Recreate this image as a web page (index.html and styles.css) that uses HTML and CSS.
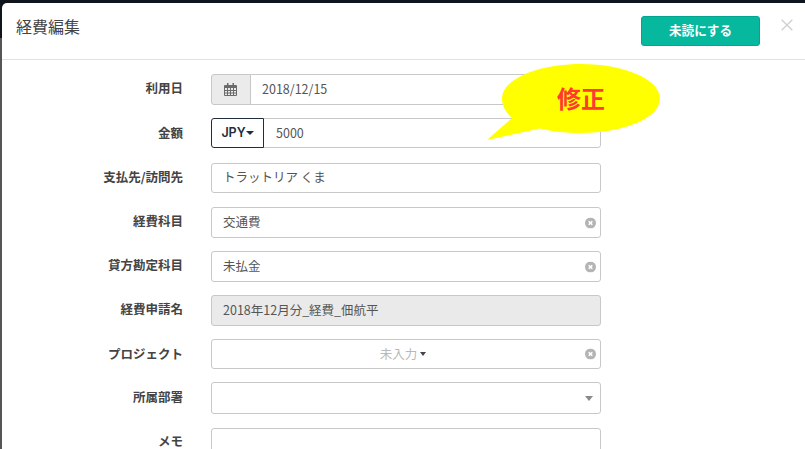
FILE: index.html
```html
<!DOCTYPE html>
<html lang="ja">
<head>
<meta charset="utf-8">
<title>経費編集</title>
<link rel="stylesheet" href="styles.css">
</head>
<body>
<div class="modal">
  <header class="modal-head">
    <h1 class="title">経費編集</h1>
    <button class="unread" type="button">未読にする</button>
    <svg class="close" width="12" height="12" viewBox="0 0 12 12"><path d="M.7.7L11.300 11.300M11.300.7L.7 11.300" stroke="#d0d0d0" stroke-width="1.400" fill="none"/></svg>
  </header>
  <form class="form">
    <div class="row">
      <label class="label">利用日</label>
      <div class="field">
        <span class="addon">
          <svg width="13" height="13" viewBox="0 0 13 13"><path fill="#6b6b6b" fill-rule="evenodd" d="M3 0h1.500v2H8.500V0H10v2h2a1 1 0 0 1 1 1v9a1 1 0 0 1-1 1H1a1 1 0 0 1-1-1V3a1 1 0 0 1 1-1h2zM1 5v2h2V5zm3 0v2h2V5zm3 0v2h2V5zm3 0v2h2V5zM1 8v1.500h2V8zm3 0v1.500h2V8zm3 0v1.500h2V8zm3 0v1.500h2V8zM1 10.500V12h2v-1.500zm3 0V12h2v-1.500zm3 0V12h2v-1.500zm3 0V12h2v-1.500z"/></svg>
        </span>
        <div class="box joined">2018/12/15</div>
      </div>
    </div>
    <div class="row amount-row">
      <label class="label">金額</label>
      <div class="field">
        <span class="currency">JPY<i class="caret dark"></i></span>
        <div class="box joined amount">5000</div>
      </div>
    </div>
    <div class="row payee-row">
      <label class="label">支払先/訪問先</label>
      <div class="field"><div class="box">トラットリア くま</div></div>
    </div>
    <div class="row">
      <label class="label">経費科目</label>
      <div class="field"><div class="box">交通費<svg class="clear" width="11" height="11" viewBox="0 0 11 11"><circle cx="5.500" cy="5.500" r="5.500" fill="#b4b4b4"/><path d="M3.700 3.700l3.600 3.600M7.300 3.700l-3.600 3.600" stroke="#fff" stroke-width="1.600"/></svg></div></div>
    </div>
    <div class="row">
      <label class="label">貸方勘定科目</label>
      <div class="field"><div class="box">未払金<svg class="clear" width="11" height="11" viewBox="0 0 11 11"><circle cx="5.500" cy="5.500" r="5.500" fill="#b4b4b4"/><path d="M3.700 3.700l3.600 3.600M7.300 3.700l-3.600 3.600" stroke="#fff" stroke-width="1.600"/></svg></div></div>
    </div>
    <div class="row">
      <label class="label">経費申請名</label>
      <div class="field"><div class="box disabled">2018年12月分_経費_佃航平</div></div>
    </div>
    <div class="row project-row">
      <label class="label">プロジェクト</label>
      <div class="field"><div class="box center"><span class="placeholder">未入力</span><i class="caret small"></i><svg class="clear" width="11" height="11" viewBox="0 0 11 11"><circle cx="5.500" cy="5.500" r="5.500" fill="#b4b4b4"/><path d="M3.700 3.700l3.600 3.600M7.300 3.700l-3.600 3.600" stroke="#fff" stroke-width="1.600"/></svg></div></div>
    </div>
    <div class="row dept-row">
      <label class="label">所属部署</label>
      <div class="field"><div class="box"><i class="caret gray"></i></div></div>
    </div>
    <div class="row memo-row">
      <label class="label">メモ</label>
      <div class="field"><div class="box area"></div></div>
    </div>
  </form>
  <div class="bubble">
    <svg class="bubble-shape" width="176" height="80" viewBox="0 0 176 80"><path fill="#ffff00" d="M94 0c44 0 79 15.500 79 34.500s-35 34.500-79 34.500c-15 0-29-1.500-41-4.500L0 76 25 54C18.500 48 15 41.500 15 34.500 15 15.500 50 0 94 0z"/></svg>
    <span class="bubble-text">修正</span>
  </div>
</div>
</body>
</html>
```
FILE: styles.css
```css
* { box-sizing: border-box; }
html, body { margin: 0; padding: 0; height: 449px; overflow: hidden; }
body {
  background: linear-gradient(#10141c 0 38px, #555 38px);
  font-family: "Noto Sans CJK JP", "Liberation Sans", sans-serif;
  color: #333;
}
.modal {
  position: relative;
  margin: 3px 0 0 2px;
  height: 446px;
  overflow: hidden;
  background: #fff;
  border-radius: 5px 0 0 0;
}
.modal-head {
  display: flex;
  align-items: flex-start;
  height: 57px;
  padding: 13px 12px 0 14px;
  border-bottom: 1px solid #e1e1e1;
}
.title { margin: -1px 0 0; flex: 1; font-size: 16px; font-weight: 400; line-height: 22px; color: #444; }
.unread {
  width: 119px;
  height: 30px;
  margin-right: 21px;
  padding: 0 0 1px;
  border: 1px solid #04a58e;
  border-radius: 3px;
  background: #05b89e;
  color: #fff;
  font: 700 12.600px/1 "Noto Sans CJK JP", sans-serif;
}
.close { margin-top: 3px; }
.form { padding-top: 14px; }
.row { display: flex; align-items: center; height: 31px; margin-bottom: 13px; }
.amount-row { height: 30px; margin-bottom: 15px; }
.payee-row { height: 30px; margin-bottom: 14px; }
.project-row { height: 30px; }
.dept-row { height: 32px; margin-bottom: 14px; }
.memo-row { align-items: flex-start; }
.label {
  width: 181px;
  padding-bottom: 2px;
  text-align: right;
  font-size: 12.500px;
  font-weight: 700;
  line-height: 1;
  color: #444;
}
.amount-row .label, .project-row .label { padding-bottom: 0; }
.memo-row .label { margin-top: 7px; padding-bottom: 0; }
.field { display: flex; width: 390px; height: 100%; margin-left: 28px; }
.box {
  position: relative;
  flex: 1;
  display: flex;
  align-items: center;
  height: 100%;
  padding: 0 11px 1px;
  border: 1px solid #c8c8c8;
  border-radius: 3px;
  background: #fff;
  font: 12.500px/1 "Noto Sans CJK JP", sans-serif;
  color: #555;
}
.box.joined { border-radius: 0 3px 3px 0; margin-left: -1px; }
.box.amount { padding: 0 11px 0 12px; }
.box.disabled { background: #eaeaea; }
.box.center { justify-content: center; padding: 0 17px 0 11px; }
.box.area { height: 60px; }
.placeholder { color: #b8b8b8; }
.addon {
  display: flex;
  align-items: center;
  justify-content: center;
  width: 40px;
  padding-right: 2px;
  border: 1px solid #c8c8c8;
  border-radius: 3px 0 0 3px;
  background: #ebebeb;
}
.currency {
  display: flex;
  align-items: center;
  justify-content: center;
  width: 53px;
  position: relative;
  z-index: 1;
  border: 1px solid #1f2d3d;
  border-radius: 3px 0 0 3px;
  background: #fff;
  font: 600 12.500px/1 "Inter", "Liberation Sans", sans-serif;
  color: #1f2d3d;
}
.caret {
  display: inline-block;
  width: 0;
  height: 0;
  border-top: 4px solid #1f2d3d;
  border-left: 4px solid transparent;
  border-right: 4px solid transparent;
}
.caret.small { margin-left: 3px; border-top-color: #444; border-left-width: 3.500px; border-right-width: 3.500px; }
.caret.gray {
  position: absolute;
  right: 7px;
  top: 13px;
  border-top: 5px solid #8a8a8a;
  border-left: 4.500px solid transparent;
  border-right: 4.500px solid transparent;
}
.clear { position: absolute; right: 4px; top: 50%; transform: translateY(-50%); }
.bubble { position: absolute; left: 485px; top: 61px; width: 176px; height: 80px; }
.bubble-shape { display: block; }
.bubble-text {
  position: absolute;
  left: 70px;
  top: 18px;
  font: 700 24px/32px "Noto Sans CJK JP", sans-serif;
  color: #ff3b30;
}
```
